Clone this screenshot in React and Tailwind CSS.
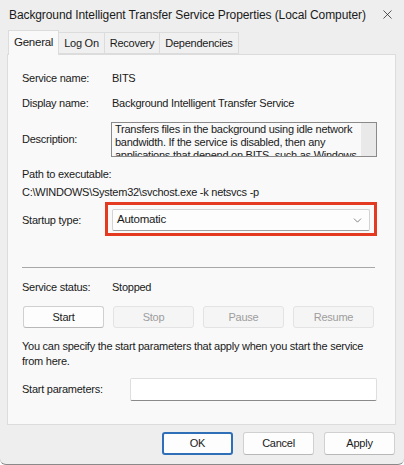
import { ChevronDown, X } from 'lucide-react'

const font = "font-['Liberation_Sans',Arial,sans-serif]"

function Label({ children, className = '' }) {
  return <div className={`w-[90px] shrink-0 ${className}`}>{children}</div>
}

function ServiceButton({ children, enabled }) {
  return (
    <button
      className={`h-[22px] w-[81px] rounded-[3px] border text-[11px] ${
        enabled
          ? 'border-[#d0d0d0] border-b-[#b8b8b8] bg-[#fdfdfd] text-[#1a1a1a]'
          : 'border-[#e3e3e3] bg-[#f5f5f5] text-[#9d9d9d]'
      }`}
    >
      {children}
    </button>
  )
}

function DialogButton({ children, primary }) {
  return (
    <button
      className={`h-[23px] w-[71px] rounded-[3px] border bg-[#fdfdfd] text-[11px] text-[#1a1a1a] ${
        primary ? 'border-[#2f6fb8] border-2' : 'border-[#d0d0d0] border-b-[#b8b8b8]'
      }`}
    >
      {children}
    </button>
  )
}

export default function App() {
  const tabs = ['General', 'Log On', 'Recovery', 'Dependencies']

  return (
    <div className={`${font} tracking-[-0.25px] w-[404px] h-[465px] bg-[#eeeeee] text-[#1a1a1a] flex flex-col overflow-hidden border-b border-[#8a8a8a] rounded-b-[6px]`}>
      {/* Title bar */}
      <div className="h-[29px] flex items-center justify-between pl-[9px] pr-[9px] shrink-0">
        <span className="text-[12px] whitespace-nowrap tracking-[-0.1px]">
          Background Intelligent Transfer Service Properties (Local Computer)
        </span>
        <X size={15} strokeWidth={1.2} className="text-[#222] shrink-0" />
      </div>

      {/* Tabs */}
      <div className="flex items-end h-[25px] pl-[8px] shrink-0">
        {tabs.map((t, i) =>
          i === 0 ? (
            <div
              key={t}
              className="h-[25px] px-[5px] flex items-center bg-[#f9f9f9] border border-b-0 border-[#dcdcdc] text-[11.5px] relative z-10 -mb-px"
            >
              {t}
            </div>
          ) : (
            <div
              key={t}
              className="h-[22px] px-[5px] flex items-center bg-[#f0f0f0] border border-l-0 border-[#dcdcdc] text-[11px]"
            >
              {t}
            </div>
          )
        )}
      </div>

      {/* General page */}
      <div className="ml-[7px] w-[389px] h-[371px] bg-[#f9f9f9] border border-[#dcdcdc] pl-[14px] pr-[18px] text-[11px] shrink-0 flex flex-col">
        <div className="flex items-center h-[16px] mt-[15px]">
          <Label>Service name:</Label>
          <span>BITS</span>
        </div>
        <div className="flex items-center h-[16px] mt-[9px]">
          <Label>Display name:</Label>
          <span>Background Intelligent Transfer Service</span>
        </div>
        <div className="flex items-center mt-[11px]">
          <Label>Description:</Label>
          <div className="ml-[-1px] w-[266px] h-[35px] border border-[#8a8a8a] bg-[#f3f3f3] flex overflow-hidden">
            <div className="flex-1 pl-[3px] pr-[2px] leading-[13px] overflow-hidden bg-[#f9f9f9]">
              Transfers files in the background using idle network bandwidth. If the service is disabled, then any
              applications that depend on BITS, such as Windows
            </div>
            <div className="w-[15px] bg-[#e9e9e9]" />
          </div>
        </div>

        <div className="h-[16px] mt-[9px] flex items-center">Path to executable:</div>
        <div className="h-[16px] mt-[2px] flex items-center">C:\WINDOWS\System32\svchost.exe -k netsvcs -p</div>

        <div className="flex items-center mt-[2px]">
          <Label className="mt-[2px]">Startup type:</Label>
          <div className="-ml-[7px] border-[3px] border-[#e53a22] p-[4px] w-[280px] h-[34px] flex">
            <div className="flex-1 h-[22px] bg-[#fdfdfd] border border-[#d3d3d3] border-b-[#a0a0a0] rounded-[2px] flex items-center justify-between pl-[4px] pr-[5px]">
              <span className="text-[11.5px]">Automatic</span>
              <ChevronDown size={13} strokeWidth={1.3} className="text-[#555]" />
            </div>
          </div>
        </div>

        <div className="h-px bg-[#a8a8a8] mt-[31px] mr-[2px]" />

        <div className="flex items-center h-[16px] mt-[11px]">
          <Label>Service status:</Label>
          <span>Stopped</span>
        </div>

        <div className="flex gap-[9px] mt-[11px] pl-px">
          <ServiceButton enabled>Start</ServiceButton>
          <ServiceButton>Stop</ServiceButton>
          <ServiceButton>Pause</ServiceButton>
          <ServiceButton>Resume</ServiceButton>
        </div>

        <p className="mt-[11px] leading-[15px] -mr-[6px]">
          You can specify the start parameters that apply when you start the service from here.
        </p>

        <div className="flex items-center mt-[9px]">
          <Label className="w-[108px]">Start parameters:</Label>
          <div className="w-[248px] h-[23px] bg-white border border-[#dedede] border-b-[#8a8a8a] rounded-[2px]" />
        </div>
      </div>

      {/* Dialog buttons */}
      <div className="flex justify-end gap-[10px] pr-[9px] mt-[7px]">
        <DialogButton primary>OK</DialogButton>
        <DialogButton>Cancel</DialogButton>
        <DialogButton>Apply</DialogButton>
      </div>
    </div>
  )
}
